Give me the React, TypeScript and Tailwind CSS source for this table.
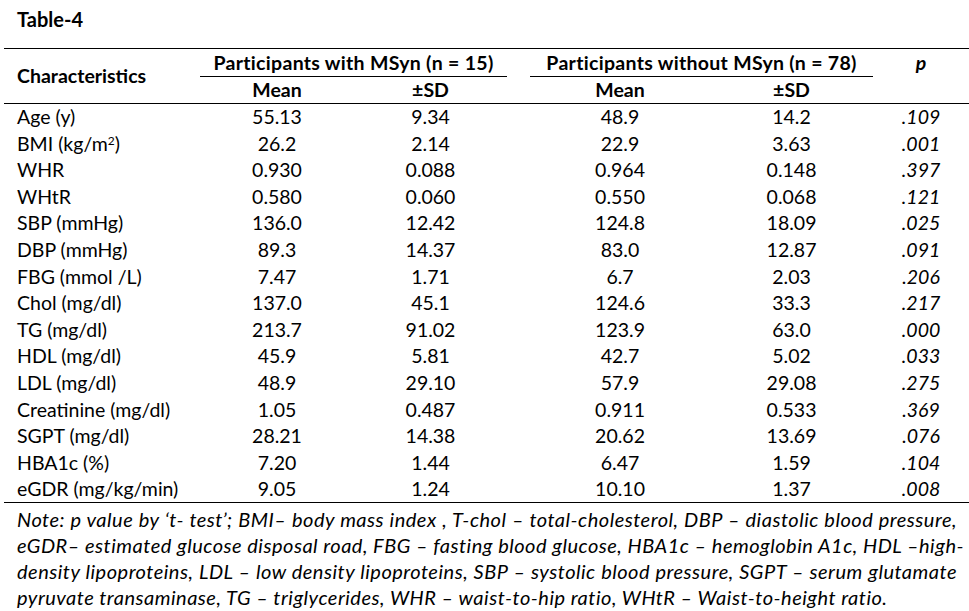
import React from 'react';

const rows: [React.ReactNode, string, string, string, string, string][] = [
  ['Age (y)', '55.13', '9.34', '48.9', '14.2', '.109'],
  [<>BMI (kg/m<sup className="text-[12px]">2</sup>)</>, '26.2', '2.14', '22.9', '3.63', '.001'],
  ['WHR', '0.930', '0.088', '0.964', '0.148', '.397'],
  ['WHtR', '0.580', '0.060', '0.550', '0.068', '.121'],
  ['SBP (mmHg)', '136.0', '12.42', '124.8', '18.09', '.025'],
  ['DBP (mmHg)', '89.3', '14.37', '83.0', '12.87', '.091'],
  ['FBG (mmol /L)', '7.47', '1.71', '6.7', '2.03', '.206'],
  ['Chol (mg/dl)', '137.0', '45.1', '124.6', '33.3', '.217'],
  ['TG (mg/dl)', '213.7', '91.02', '123.9', '63.0', '.000'],
  ['HDL (mg/dl)', '45.9', '5.81', '42.7', '5.02', '.033'],
  ['LDL (mg/dl)', '48.9', '29.10', '57.9', '29.08', '.275'],
  ['Creatinine (mg/dl)', '1.05', '0.487', '0.911', '0.533', '.369'],
  ['SGPT (mg/dl)', '28.21', '14.38', '20.62', '13.69', '.076'],
  ['HBA1c (%)', '7.20', '1.44', '6.47', '1.59', '.104'],
  ['eGDR (mg/kg/min)', '9.05', '1.24', '10.10', '1.37', '.008'],
];

const noteLines = [
  'Note: p value by \u2018t- test\u2019; BMI\u2013 body mass index , T-chol \u2013 total-cholesterol, DBP \u2013 diastolic blood pressure,',
  'eGDR\u2013 estimated glucose disposal road, FBG \u2013 fasting blood glucose, HBA1c \u2013 hemoglobin A1c, HDL \u2013high-',
  'density lipoproteins, LDL \u2013 low density lipoproteins, SBP \u2013 systolic blood pressure, SGPT \u2013 serum glutamate',
  'pyruvate transaminase, TG \u2013 triglycerides, WHR \u2013 waist-to-hip ratio, WHtR \u2013 Waist-to-height ratio.',
];

export default function App() {
  return (
    <div className="w-[969px] h-[611px] bg-white text-black font-['Lato',sans-serif] text-[19.5px] leading-none overflow-hidden">
      <div className="pl-[17px] pt-[9px] h-[48px] font-bold text-[20px]">Table-4</div>

      <table className="ml-[4px] w-[965px] border-collapse table-fixed">
        <colgroup>
          <col className="w-[196px]" />
          <col className="w-[154px]" />
          <col className="w-[153px]" />
          <col className="w-[23px]" />
          <col className="w-[180px]" />
          <col className="w-[163px]" />
          <col className="w-[96px]" />
        </colgroup>
        <thead className="font-bold">
          <tr className="h-[28px] border-t border-black">
            <th rowSpan={2} className="text-left pl-[13px] font-bold align-middle">Characteristics</th>
            <th colSpan={2} className="font-bold border-b border-black whitespace-nowrap tracking-[0.3px]">Participants with MSyn (n = 15)</th>
            <th></th>
            <th colSpan={2} className="font-bold border-b border-black whitespace-nowrap tracking-[0.3px]">Participants without MSyn (n = 78)</th>
            <th className="italic font-bold">p</th>
          </tr>
          <tr className="h-[27px] border-b border-black">
            <th className="font-bold">Mean</th>
            <th className="font-bold">±SD</th>
            <th></th>
            <th className="font-bold">Mean</th>
            <th className="font-bold">±SD</th>
            <th></th>
          </tr>
        </thead>
        <tbody>
          {rows.map((r, i) => (
            <tr key={i} className={`h-[26.6px] ${i === rows.length - 1 ? 'border-b border-black' : ''}`}>
              <td className="pl-[13px] whitespace-nowrap">{r[0]}</td>
              <td className="text-center">{r[1]}</td>
              <td className="text-center">{r[2]}</td>
              <td></td>
              <td className="text-center">{r[3]}</td>
              <td className="text-center">{r[4]}</td>
              <td className="text-center italic">{r[5]}</td>
            </tr>
          ))}
        </tbody>
      </table>

      <div className="pl-[17px] pr-[12px] pt-[6px] italic text-[20px] tracking-[0.5px]">
        {noteLines.map((l, i) => (
          <div
            key={i}
            className={`h-[26px] whitespace-nowrap ${i < 3 ? 'text-justify [text-align-last:justify]' : ''}`}
          >
            {l}
          </div>
        ))}
      </div>
    </div>
  );
}
